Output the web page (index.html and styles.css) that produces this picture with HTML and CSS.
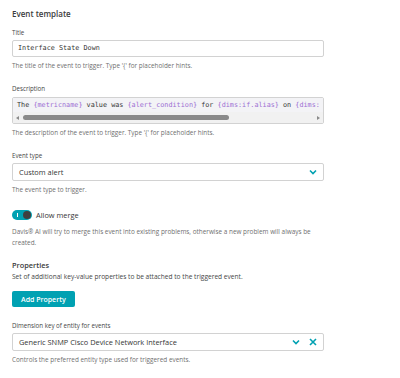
FILE: index.html
```html
<!DOCTYPE html>
<html lang="en">
<head>
    <meta charset="UTF-8">
    <meta name="viewport" content="width=device-width, initial-scale=1.0">
    <title>Event template</title>
    <link rel="stylesheet" href="styles.css">
</head>
<body>
    <div class="panel">
        <h2 class="section-title">Event template</h2>

        <label class="field-label label-first">Title</label>
        <div class="text-input mono">Interface State Down</div>
        <p class="hint">The title of the event to trigger. Type '{' for placeholder hints.</p>

        <label class="field-label">Description</label>
        <div class="code-box">
            <div class="code-line mono">The <span class="ph">{metricname}</span> value was <span class="ph">{alert_condition}</span> for <span class="ph">{dims:if.alias}</span> on <span class="ph">{dims:</span></div>
            <div class="scrollbar">
                <span class="arrow left"></span>
                <span class="thumb"></span>
                <span class="arrow right"></span>
            </div>
        </div>
        <p class="hint">The description of the event to trigger. Type '{' for placeholder hints.</p>

        <label class="field-label">Event type</label>
        <div class="select">
            <span class="select-value">Custom alert</span>
            <svg class="chevron" width="8" height="6" viewBox="0 0 8 6"><path d="M1 1.5 L4 4.5 L7 1.5" fill="none" stroke="#00a1b2" stroke-width="1.6"/></svg>
        </div>
        <p class="hint">The event type to trigger.</p>

        <div class="toggle-row">
            <span class="toggle"><span class="toggle-mark"></span><span class="toggle-knob"></span></span>
            <span class="toggle-label">Allow merge</span>
        </div>
        <p class="note">Davis® AI will try to merge this event into existing problems, otherwise a new problem will always be created.</p>

        <h3 class="sub-title">Properties</h3>
        <p class="sub-text">Set of additional key-value properties to be attached to the triggered event.</p>
        <button class="btn-primary">Add Property</button>

        <label class="field-label">Dimension key of entity for events</label>
        <div class="select">
            <span class="select-value">Generic SNMP Cisco Device Network Interface</span>
            <svg class="chevron" width="8" height="6" viewBox="0 0 8 6"><path d="M1 1.5 L4 4.5 L7 1.5" fill="none" stroke="#00a1b2" stroke-width="1.6"/></svg>
            <svg class="clear" width="8" height="8" viewBox="0 0 8 8"><path d="M1 1 L7 7 M7 1 L1 7" fill="none" stroke="#00a1b2" stroke-width="1.6"/></svg>
        </div>
        <p class="hint">Controls the preferred entity type used for triggered events.</p>
    </div>
</body>
</html>
```

FILE: styles.css
```css
body, html {
    margin: 0;
    padding: 0;
    background: #ffffff;
}
body {
    font-family: "Open Sans", "Liberation Sans", sans-serif;
    color: #454646;
}
.panel {
    width: 312px;
    padding: 8px 12px 0 12px;
}
.mono {
    font-family: "DejaVu Sans Mono", "Liberation Mono", monospace;
}
.section-title {
    margin: 0;
    font-size: 8px;
    line-height: 12px;
    font-weight: 600;
    color: #3c3c3c;
}
.field-label {
    display: block;
    margin-top: 15px;
    font-size: 6.2px;
    line-height: 8px;
    color: #454646;
}
.label-first {
    margin-top: 9px;
}
.text-input {
    margin-top: 3px;
    height: 17px;
    box-sizing: border-box;
    border: 1px solid #d2d2d2;
    border-radius: 2px;
    padding: 0 5px;
    font-size: 6.8px;
    line-height: 15px;
    color: #353535;
}
.hint {
    margin: 4px 0 0 0;
    font-size: 6.4px;
    line-height: 9px;
    color: #6f6f6f;
}
.code-box {
    margin-top: 4px;
    height: 27px;
    box-sizing: border-box;
    border: 1px solid #d2d2d2;
    border-radius: 2px;
    overflow: hidden;
}
.code-line {
    height: 14px;
    padding: 0 4px;
    background: #f3f3f6;
    font-size: 6.8px;
    line-height: 14px;
    white-space: nowrap;
    color: #353535;
}
.ph {
    color: #9d6fd3;
}
.scrollbar {
    display: flex;
    align-items: center;
    height: 11px;
    padding: 0 3px;
    background: #f1f1f1;
}
.thumb {
    width: 206px;
    height: 5px;
    margin-left: 4px;
    border-radius: 3px;
    background: #8a8a8a;
}
.arrow {
    width: 0;
    height: 0;
    border-top: 2.5px solid transparent;
    border-bottom: 2.5px solid transparent;
}
.arrow.left {
    border-right: 3px solid #8a8a8a;
}
.arrow.right {
    margin-left: auto;
    border-left: 3px solid #8a8a8a;
}
.select {
    display: flex;
    align-items: center;
    gap: 9px;
    margin-top: 3px;
    height: 18px;
    box-sizing: border-box;
    border: 1px solid #d2d2d2;
    border-radius: 2px;
    padding: 0 6px 0 6px;
}
.select-value {
    flex: 1;
    font-size: 7.4px;
    color: #353535;
}
.toggle-row {
    display: flex;
    align-items: center;
    gap: 4px;
    margin-top: 16px;
    height: 10px;
}
.toggle {
    position: relative;
    width: 20px;
    height: 10px;
    border-radius: 5px;
    background: #00a1b2;
}
.toggle-mark {
    position: absolute;
    left: 5px;
    top: 3px;
    width: 1px;
    height: 4px;
    background: #ffffff;
}
.toggle-knob {
    position: absolute;
    right: 1px;
    top: 1px;
    width: 8px;
    height: 8px;
    border-radius: 50%;
    background: #3f3f3f;
}
.toggle-label {
    font-size: 7.4px;
    color: #353535;
}
.note {
    margin: 6px 0 0 0;
    font-size: 6.4px;
    line-height: 11px;
    color: #6f6f6f;
}
.sub-title {
    margin: 12px 0 0 0;
    font-size: 7.4px;
    line-height: 10px;
    font-weight: 600;
    color: #3c3c3c;
}
.sub-text {
    margin: 2px 0 0 0;
    font-size: 6.6px;
    line-height: 10px;
    color: #454646;
}
.btn-primary {
    display: block;
    margin-top: 9px;
    height: 16px;
    padding: 0 9px;
    border: none;
    border-radius: 2px;
    background: #00a1b2;
    color: #ffffff;
    font-family: "Open Sans", "Liberation Sans", sans-serif;
    font-size: 7px;
    font-weight: 600;
}
```
